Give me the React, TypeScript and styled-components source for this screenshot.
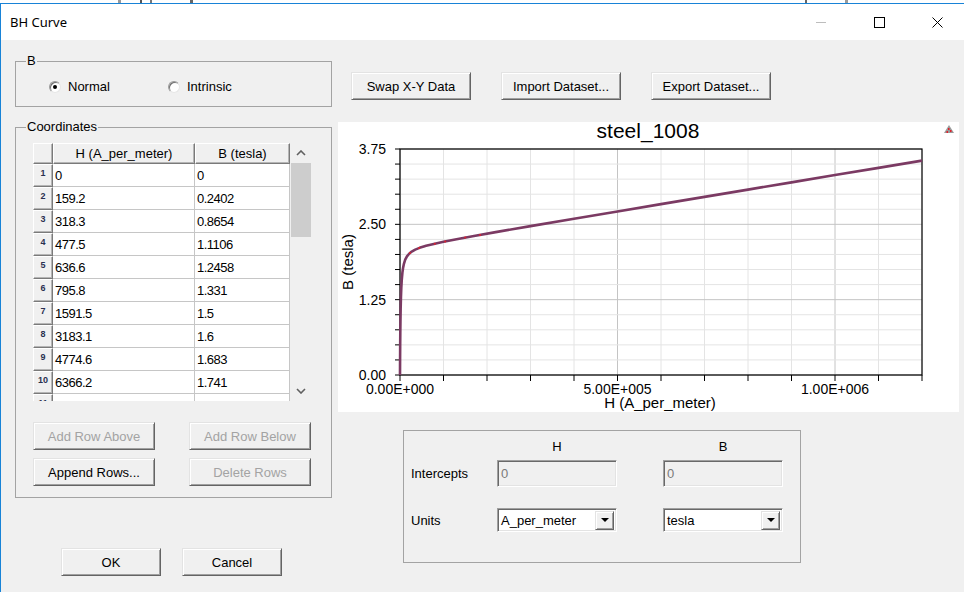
import React from "react";
import styled, { createGlobalStyle, css } from "styled-components";

const GlobalStyle = createGlobalStyle`
  html, body { margin: 0; padding: 0; background: #fff; }
  body { font-family: "Liberation Sans", Arial, sans-serif; font-size: 13px; color: #000; }
  #root { width: 964px; height: 592px; overflow: hidden; }
  * { box-sizing: border-box; }
`;

const Screen = styled.div`
  width: 964px;
  height: 592px;
  display: flex;
  flex-direction: column;
  background: #fff;
  overflow: hidden;
`;

const BehindStrip = styled.div`
  flex: 0 0 3px;
  height: 3px;
  background:
    linear-gradient(to right, transparent 118px, #9a9a9a 118px, #9a9a9a 121px, transparent 121px),
    linear-gradient(to right, transparent 140px, #555 140px, #555 142px, transparent 142px, transparent 150px, #777 150px, #777 152px, transparent 152px, transparent 190px, #666 190px, #666 193px, transparent 193px),
    linear-gradient(to right, transparent 805px, #666 805px, #666 807px, transparent 807px, transparent 845px, #9a9a9a 845px, #9a9a9a 848px, transparent 848px),
    #fff;
`;

const Window = styled.div`
  flex: 1;
  min-height: 0;
  display: flex;
  flex-direction: column;
  border-top: 1px solid #1883d7;
  border-left: 1px solid #1883d7;
`;

const TitleBar = styled.div`
  flex: 0 0 36px;
  height: 36px;
  background: #fff;
  display: flex;
  align-items: center;
  padding-left: 9px;
  overflow: hidden;
`;

const TitleText = styled.span`
  font-family: "Noto Sans", "Liberation Sans", sans-serif;
  font-size: 13px;
  color: #000;
`;

const Controls = styled.div`
  margin-left: auto;
  margin-right: -2px;
  height: 100%;
  display: flex;
`;

const CtrlBtn = styled.div`
  width: 58px;
  height: 100%;
  display: flex;
  align-items: center;
  justify-content: center;
`;

const Body = styled.div`
  flex: 1;
  min-height: 0;
  background: #f0f0f0;
  display: flex;
  gap: 6px;
  padding: 21px 0 0 14px;
`;

const LeftCol = styled.div`
  width: 317px;
  display: flex;
  flex-direction: column;
`;

const RightCol = styled.div`
  flex: 1;
  display: flex;
  flex-direction: column;
`;

const Group = styled.div<{ $h: number; $mt?: number }>`
  position: relative;
  height: ${(p) => p.$h}px;
  margin-top: ${(p) => p.$mt ?? 0}px;
  border: 1px solid #a3a3a3;
`;

const GroupLabel = styled.span`
  position: absolute;
  top: -9px;
  left: 10px;
  padding: 0 1px;
  background: #f0f0f0;
  line-height: 15px;
  font-size: 13px;
`;

const RadioRow = styled.div`
  display: flex;
  align-items: center;
  padding: 17px 0 0 33px;
`;

const RadioOption = styled.label<{ $w?: number }>`
  display: flex;
  align-items: center;
  gap: 7px;
  width: ${(p) => (p.$w ? `${p.$w}px` : "auto")};
  font-size: 13px;
  line-height: 15px;
`;

const RadioCircle = styled.span<{ $checked?: boolean }>`
  position: relative;
  width: 12px;
  height: 12px;
  border-radius: 50%;
  background: #fff;
  border: 1px solid;
  border-color: #9a9a9a #e6e6e6 #e6e6e6 #9a9a9a;
  box-shadow: inset 1px 1px 0 #707070;
  ${(p) =>
    p.$checked &&
    css`
      &::after {
        content: "";
        position: absolute;
        left: 3px;
        top: 3px;
        width: 4px;
        height: 4px;
        border-radius: 50%;
        background: #000;
      }
    `}
`;

const CoordsInner = styled.div`
  padding: 15px 0 0 17px;
  display: flex;
  flex-direction: column;
`;

const TableWrap = styled.div`
  width: 278px;
  height: 258px;
  display: flex;
  overflow: hidden;
`;

const Table = styled.div`
  display: grid;
  grid-template-columns: 20px 142px 95px;
  grid-template-rows: 21px;
  grid-auto-rows: 23px;
  align-content: start;
  width: 257px;
`;

const raised = css`
  background: #f0f0f0;
  border: 1px solid;
  border-color: #fff #7a7a7a #7a7a7a #fff;
  box-shadow: inset -1px -1px 0 #b5b5b5;
`;

const HeadCell = styled.div`
  ${raised};
  display: flex;
  align-items: center;
  justify-content: center;
  font-size: 13px;
`;

const RowHead = styled.div`
  ${raised};
  font-size: 9px;
  font-weight: bold;
  color: #2a3050;
  text-align: center;
  padding-top: 4px;
  line-height: 1;
`;

const Cell = styled.div`
  background: #fff;
  border-bottom: 1px solid #c6c6c6;
  border-right: 1px solid #c6c6c6;
  display: flex;
  align-items: center;
  padding-left: 2px;
  font-size: 13px;
  letter-spacing: -0.5px;
`;

const ScrollBar = styled.div`
  width: 21px;
  display: flex;
  flex-direction: column;
  align-items: stretch;
`;

const ScrollArrow = styled.div`
  height: 20px;
  display: flex;
  align-items: center;
  justify-content: center;
`;

const ScrollThumb = styled.div`
  height: 74px;
  margin-left: 1px;
  background: #cdcdcd;
`;

const ScrollTrack = styled.div`
  flex: 1;
`;

const ButtonGrid = styled.div`
  display: grid;
  grid-template-columns: 122px 122px;
  column-gap: 34px;
  row-gap: 8px;
  margin-top: 21px;
`;

const Btn = styled.button<{ $w?: number; $disabled?: boolean }>`
  width: ${(p) => (p.$w ? `${p.$w}px` : "100%")};
  height: 28px;
  padding: 0;
  font-family: "Liberation Sans", Arial, sans-serif;
  font-size: 13px;
  color: ${(p) => (p.$disabled ? "#a3a3a3" : "#000")};
  background: #f0f0f0;
  border: 1px solid;
  border-color: #e3e3e3 #646464 #646464 #e3e3e3;
  box-shadow: inset 1px 1px 0 #fff, inset -1px -1px 0 #a0a0a0;
  display: flex;
  align-items: center;
  justify-content: center;
`;

const DialogButtons = styled.div`
  display: flex;
  gap: 21px;
  margin: 50px 0 0 46px;
`;

const TopButtons = styled.div`
  display: flex;
  gap: 30px;
  margin: 11px 0 0 13px;
`;

const ChartPanel = styled.div`
  margin-top: 22px;
  width: 621px;
  height: 290px;
  background: #fff;
`;

const UnitsGroup = styled.div`
  margin: 18px 0 0 65px;
  width: 398px;
  height: 133px;
  border: 1px solid #a3a3a3;
  display: grid;
  grid-template-columns: 40px 120px 120px;
  grid-template-rows: 21px 48px 24px;
  column-gap: 46px;
  padding: 8px 0 0 7px;
  align-content: start;
`;

const ColHead = styled.div`
  text-align: center;
  font-size: 13px;
  line-height: 16px;
`;

const RowLabel = styled.div<{ $h: number }>`
  height: ${(p) => p.$h}px;
  display: flex;
  align-items: center;
  font-size: 13px;
  white-space: nowrap;
`;

const sunken = css`
  border: 1px solid;
  border-color: #a0a0a0 #fff #fff #a0a0a0;
  box-shadow: inset 1px 1px 0 #696969, inset -1px -1px 0 #e3e3e3;
`;

const InterceptBox = styled.div`
  ${sunken};
  height: 27px;
  background: #f0f0f0;
  color: #7a7a7a;
  font-size: 13px;
  line-height: 15px;
  padding: 5px 0 0 3px;
`;

const Select = styled.div`
  ${sunken};
  height: 24px;
  background: #fff;
  display: flex;
  align-items: center;
  padding: 0 2px 0 3px;
  font-size: 13px;
`;

const SelectText = styled.span`
  flex: 1;
`;

const DropBtn = styled.span`
  width: 19px;
  height: 19px;
  background: #f0f0f0;
  border: 1px solid;
  border-color: #e3e3e3 #646464 #646464 #e3e3e3;
  box-shadow: inset 1px 1px 0 #fff, inset -1px -1px 0 #a0a0a0;
  display: flex;
  align-items: center;
  justify-content: center;
`;

const rows: [string, string][] = [
  ["0", "0"],
  ["159.2", "0.2402"],
  ["318.3", "0.8654"],
  ["477.5", "1.1106"],
  ["636.6", "1.2458"],
  ["795.8", "1.331"],
  ["1591.5", "1.5"],
  ["3183.1", "1.6"],
  ["4774.6", "1.683"],
  ["6366.2", "1.741"],
  ["7957.7", "1.78"],
];

const PL = 62;
const PR = 584;
const PT = 27;
const PB = 253;
const xOf = (h: number) => PL + (h / 1.2e6) * (PR - PL);
const yOf = (b: number) => PB - (b / 3.75) * (PB - PT);
const bh = (h: number) => (2.12 * h) / (h + 1400) + 1.2e-6 * h;

function curvePath() {
  const hs: number[] = [0, 100, 200, 400, 700, 1000, 1500, 2200, 3000, 4000, 5500, 7000, 9000, 12000, 16000, 21000, 27000, 35000, 45000, 60000, 80000, 100000, 130000, 170000, 220000];
  for (let h = 300000; h <= 1.2e6; h += 100000) hs.push(h);
  return hs.map((h, i) => `${i ? "L" : "M"}${xOf(h).toFixed(2)},${yOf(h === 0 ? 0 : bh(h)).toFixed(2)}`).join(" ");
}

const Chart: React.FC = () => {
  const vLines = Array.from({ length: 13 }, (_, i) => i);
  const hLines = Array.from({ length: 16 }, (_, j) => j);
  const dx = (PR - PL) / 12;
  const dy = (PB - PT) / 15;
  const redDots = [23000, 44000, 80000, 104000, 150000, 184000];
  return (
    <svg width="621" height="290" viewBox="0 0 621 290" fontFamily="Liberation Sans, Arial, sans-serif">
      {vLines.map((i) => (
        <line key={`v${i}`} x1={PL + i * dx} x2={PL + i * dx} y1={PT} y2={PB} stroke={i % 5 === 0 ? "#c4c4c4" : "#e4e4e4"} strokeWidth="1" />
      ))}
      {hLines.map((j) => (
        <line key={`h${j}`} x1={PL} x2={PR} y1={PT + j * dy} y2={PT + j * dy} stroke={j % 5 === 0 ? "#c4c4c4" : "#e4e4e4"} strokeWidth="1" />
      ))}
      {hLines.map((j) => (
        <line key={`yt${j}`} x1={PL - 5} x2={PL} y1={PT + j * dy} y2={PT + j * dy} stroke="#000" strokeWidth="1" />
      ))}
      {vLines.map((i) => (
        <line key={`xt${i}`} x1={PL + i * dx} x2={PL + i * dx} y1={PB} y2={PB + 6} stroke="#000" strokeWidth="1" />
      ))}
      <rect x={PL} y={PT} width={PR - PL} height={PB - PT} fill="none" stroke="#000" strokeWidth="1.2" />
      <path d={curvePath()} fill="none" stroke="#7b3a63" strokeWidth="2.6" strokeLinejoin="round" />
      {redDots.map((h) => (
        <circle key={h} cx={xOf(h)} cy={yOf(bh(h))} r="1" fill="#e0202a" />
      ))}
      <text x="310" y="16" textAnchor="middle" fontSize="21">steel_1008</text>
      {[["3.75", 0], ["2.50", 5], ["1.25", 10], ["0.00", 15]].map(([t, j]) => (
        <text key={t as string} x="48" y={PT + (j as number) * dy + 5} textAnchor="end" fontSize="14">{t}</text>
      ))}
      {[["0.00E+000", 0], ["5.00E+005", 5], ["1.00E+006", 10]].map(([t, i]) => (
        <text key={t as string} x={PL + (i as number) * dx} y="272" textAnchor="middle" fontSize="14">{t}</text>
      ))}
      <text x="322" y="286" textAnchor="middle" fontSize="15">H (A_per_meter)</text>
      <text transform="translate(15,140) rotate(-90)" textAnchor="middle" fontSize="15">B (tesla)</text>
      <g>
        <polygon points="611,3 616,11 606,11" fill="#9a9a9a" />
        <rect x="610" y="6" width="1.5" height="2" fill="#e0202a" />
        <rect x="612" y="8" width="1.5" height="2" fill="#e0202a" />
        <rect x="608.5" y="9" width="1.5" height="2" fill="#e0202a" />
      </g>
    </svg>
  );
};

const Chevron: React.FC<{ down?: boolean }> = ({ down }) => (
  <svg width="10" height="6" viewBox="0 0 10 6">
    <polyline points={down ? "1,1 5,5 9,1" : "1,5 5,1 9,5"} fill="none" stroke="#606060" strokeWidth="1.6" />
  </svg>
);

const DropArrow: React.FC = () => (
  <svg width="8" height="4" viewBox="0 0 8 4">
    <polygon points="0,0 8,0 4,4" fill="#000" />
  </svg>
);

export default function App() {
  return (
    <>
      <GlobalStyle />
      <Screen>
        <BehindStrip />
        <Window>
          <TitleBar>
            <TitleText>BH Curve</TitleText>
            <Controls>
              <CtrlBtn>
                <svg width="10" height="10" viewBox="0 0 10 10">
                  <line x1="0" y1="5.5" x2="10" y2="5.5" stroke="#bdbdbd" strokeWidth="1" />
                </svg>
              </CtrlBtn>
              <CtrlBtn>
                <svg width="11" height="11" viewBox="0 0 11 11">
                  <rect x="0.5" y="0.5" width="10" height="10" fill="none" stroke="#000" strokeWidth="1" />
                </svg>
              </CtrlBtn>
              <CtrlBtn>
                <svg width="11" height="11" viewBox="0 0 11 11">
                  <line x1="0.5" y1="0.5" x2="10.5" y2="10.5" stroke="#000" strokeWidth="1" />
                  <line x1="10.5" y1="0.5" x2="0.5" y2="10.5" stroke="#000" strokeWidth="1" />
                </svg>
              </CtrlBtn>
            </Controls>
          </TitleBar>
          <Body>
            <LeftCol>
              <Group $h={46}>
                <GroupLabel>B</GroupLabel>
                <RadioRow>
                  <RadioOption $w={119}>
                    <RadioCircle $checked />
                    Normal
                  </RadioOption>
                  <RadioOption>
                    <RadioCircle />
                    Intrinsic
                  </RadioOption>
                </RadioRow>
              </Group>
              <Group $h={371} $mt={20}>
                <GroupLabel>Coordinates</GroupLabel>
                <CoordsInner>
                  <TableWrap>
                    <Table>
                      <HeadCell />
                      <HeadCell>H (A_per_meter)</HeadCell>
                      <HeadCell>B (tesla)</HeadCell>
                      {rows.map(([h, b], i) => (
                        <React.Fragment key={i}>
                          <RowHead>{i + 1}</RowHead>
                          <Cell>{h}</Cell>
                          <Cell>{b}</Cell>
                        </React.Fragment>
                      ))}
                    </Table>
                    <ScrollBar>
                      <ScrollArrow>
                        <Chevron />
                      </ScrollArrow>
                      <ScrollThumb />
                      <ScrollTrack />
                      <ScrollArrow>
                        <Chevron down />
                      </ScrollArrow>
                    </ScrollBar>
                  </TableWrap>
                  <ButtonGrid>
                    <Btn $disabled>Add Row Above</Btn>
                    <Btn $disabled>Add Row Below</Btn>
                    <Btn>Append Rows...</Btn>
                    <Btn $disabled>Delete Rows</Btn>
                  </ButtonGrid>
                </CoordsInner>
              </Group>
              <DialogButtons>
                <Btn $w={100}>OK</Btn>
                <Btn $w={100}>Cancel</Btn>
              </DialogButtons>
            </LeftCol>
            <RightCol>
              <TopButtons>
                <Btn $w={120}>Swap X-Y Data</Btn>
                <Btn $w={120}>Import Dataset...</Btn>
                <Btn $w={120}>Export Dataset...</Btn>
              </TopButtons>
              <ChartPanel>
                <Chart />
              </ChartPanel>
              <UnitsGroup>
                <span />
                <ColHead>H</ColHead>
                <ColHead>B</ColHead>
                <RowLabel $h={27}>Intercepts</RowLabel>
                <InterceptBox>0</InterceptBox>
                <InterceptBox>0</InterceptBox>
                <RowLabel $h={24}>Units</RowLabel>
                <Select>
                  <SelectText>A_per_meter</SelectText>
                  <DropBtn>
                    <DropArrow />
                  </DropBtn>
                </Select>
                <Select>
                  <SelectText>tesla</SelectText>
                  <DropBtn>
                    <DropArrow />
                  </DropBtn>
                </Select>
              </UnitsGroup>
            </RightCol>
          </Body>
        </Window>
      </Screen>
    </>
  );
}
